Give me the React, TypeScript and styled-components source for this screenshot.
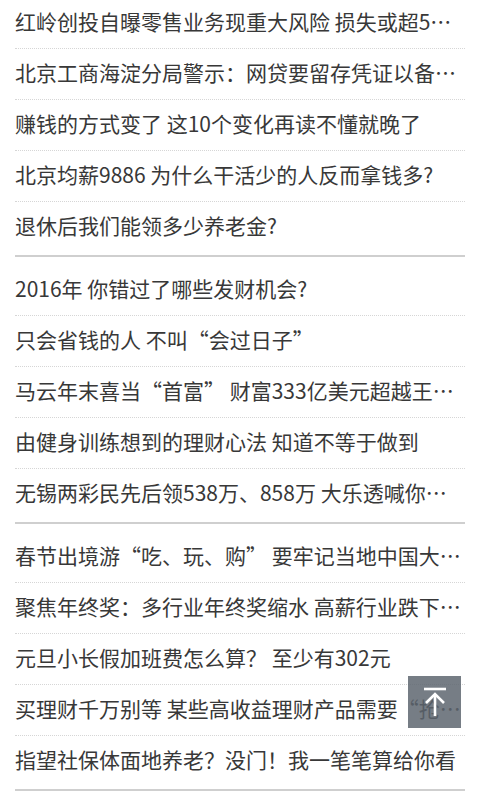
import React from 'react';
import styled, { createGlobalStyle } from 'styled-components';

const GlobalStyle = createGlobalStyle`
  html, body {
    margin: 0;
    padding: 0;
    background: #fff;
    overflow: hidden;
  }
  body {
    font-family: "Noto Sans CJK SC", "Noto Sans", sans-serif;
  }
`;

const Page = styled.div({
  width: 480,
  height: 800,
  overflow: 'hidden',
  position: 'relative',
});

// the page is shown scrolled a little
const List = styled.div({
  marginTop: -10,
});

const Group = styled.ul({
  listStyle: 'none',
  margin: '0 15px',
  padding: '8px 0 3px',
  borderBottom: '2px solid #cfcfcf',
});

const Item = styled.li({
  height: 51,
  paddingBottom: 5,
  boxSizing: 'border-box',
  display: 'flex',
  alignItems: 'center',
  borderBottom: '1px dotted #d6d6d6',
  '&:last-child': {
    height: 50,
    paddingBottom: 4,
    borderBottom: 'none',
  },
});

const Title = styled.a({
  display: 'block',
  width: '100%',
  fontSize: 21,
  color: '#383838',
  textDecoration: 'none',
  whiteSpace: 'nowrap',
  overflow: 'hidden',
  textOverflow: 'ellipsis',
});

const BackTop = styled.button({
  position: 'absolute',
  left: 408,
  top: 676,
  width: 53,
  height: 52,
  border: 'none',
  padding: 0,
  background: 'rgba(92, 100, 110, 0.84)',
  display: 'flex',
  alignItems: 'center',
  justifyContent: 'center',
});

const groups: string[][] = [
  [
    '红岭创投自曝零售业务现重大风险 损失或超5亿元',
    '北京工商海淀分局警示：网贷要留存凭证以备维权',
    '赚钱的方式变了 这10个变化再读不懂就晚了',
    '北京均薪9886 为什么干活少的人反而拿钱多?',
    '退休后我们能领多少养老金?',
  ],
  [
    '2016年 你错过了哪些发财机会?',
    '只会省钱的人 不叫“会过日子”',
    '马云年末喜当“首富” 财富333亿美元超越王健林',
    '由健身训练想到的理财心法 知道不等于做到',
    '无锡两彩民先后领538万、858万 大乐透喊你来领奖',
  ],
  [
    '春节出境游“吃、玩、购” 要牢记当地中国大使馆电话',
    '聚焦年终奖：多行业年终奖缩水 高薪行业跌下神坛',
    '元旦小长假加班费怎么算？ 至少有302元',
    '买理财千万别等 某些高收益理财产品需要“抢购”',
    '指望社保体面地养老？没门！我一笔笔算给你看',
  ],
];

const App = () => {
  return (
    <Page>
      <GlobalStyle />
      <List>
        {groups.map((g, i) => (
          <Group key={i}>
            {g.map((t) => (
              <Item key={t}>
                <Title href="#">{t}</Title>
              </Item>
            ))}
          </Group>
        ))}
      </List>
      <BackTop aria-label="返回顶部">
        <svg width="26" height="30" viewBox="0 0 26 30" fill="none" stroke="#fff" strokeWidth="2.6">
          <path d="M2 2h22" />
          <path d="M4 16l9-9 9 9" />
          <path d="M13 8v21" />
        </svg>
      </BackTop>
    </Page>
  );
};

export default App;
